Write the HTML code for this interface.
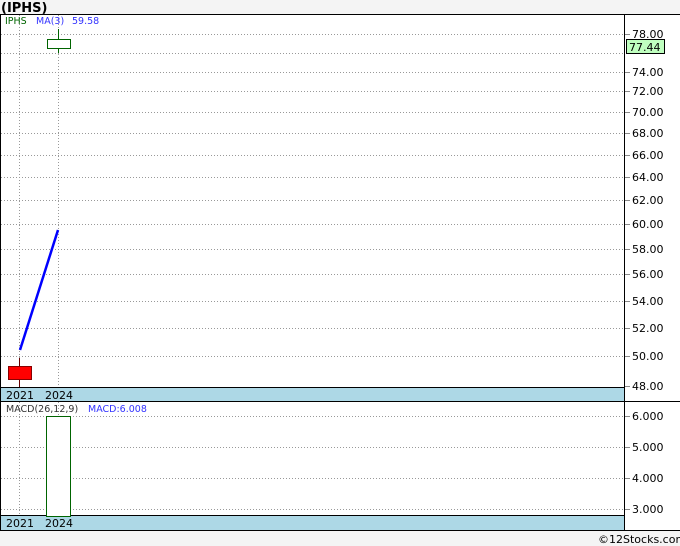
<!DOCTYPE html><html><head><style>body{margin:0;background:#f4f4f4}svg{display:block}text{font-family:"DejaVu Sans","Liberation Sans",sans-serif}</style></head><body>
<svg width="680" height="546" xmlns="http://www.w3.org/2000/svg">
<rect width="680" height="546" fill="#f4f4f4"/>
<text x="1" y="12" font-size="13" font-weight="bold" fill="#000">(IPHS)</text>
<rect x="0.5" y="14.5" width="680" height="516" fill="#fff" stroke="#000"/>
<g stroke="#999" stroke-dasharray="1,2" stroke-width="1">
<line x1="1" x2="624" y1="34.5" y2="34.5"/><line x1="1" x2="624" y1="53.5" y2="53.5"/><line x1="1" x2="624" y1="72.5" y2="72.5"/><line x1="1" x2="624" y1="91.5" y2="91.5"/><line x1="1" x2="624" y1="112.5" y2="112.5"/><line x1="1" x2="624" y1="133.5" y2="133.5"/><line x1="1" x2="624" y1="155.5" y2="155.5"/><line x1="1" x2="624" y1="177.5" y2="177.5"/><line x1="1" x2="624" y1="200.5" y2="200.5"/><line x1="1" x2="624" y1="224.5" y2="224.5"/><line x1="1" x2="624" y1="249.5" y2="249.5"/><line x1="1" x2="624" y1="274.5" y2="274.5"/><line x1="1" x2="624" y1="301.5" y2="301.5"/><line x1="1" x2="624" y1="328.5" y2="328.5"/><line x1="1" x2="624" y1="356.5" y2="356.5"/>
<line x1="1" x2="624" y1="416.5" y2="416.5"/><line x1="1" x2="624" y1="447.5" y2="447.5"/><line x1="1" x2="624" y1="478.5" y2="478.5"/><line x1="1" x2="624" y1="509.5" y2="509.5"/>
<line x1="19.5" x2="19.5" y1="15" y2="530"/><line x1="58.5" x2="58.5" y1="15" y2="530"/>
</g>
<g font-size="11" fill="#000">
<text x="632" y="38">78.00</text><text x="632" y="76">74.00</text><text x="632" y="95">72.00</text><text x="632" y="116">70.00</text><text x="632" y="137">68.00</text><text x="632" y="159">66.00</text><text x="632" y="181">64.00</text><text x="632" y="204">62.00</text><text x="632" y="228">60.00</text><text x="632" y="253">58.00</text><text x="632" y="278">56.00</text><text x="632" y="305">54.00</text><text x="632" y="332">52.00</text><text x="632" y="360">50.00</text><text x="632" y="390">48.00</text>
<text x="632" y="420">6.000</text><text x="632" y="451">5.000</text><text x="632" y="482">4.000</text><text x="632" y="513">3.000</text>
</g>
<g stroke="#888"><line x1="624" x2="630" y1="34.5" y2="34.5"/><line x1="624" x2="630" y1="72.5" y2="72.5"/><line x1="624" x2="630" y1="91.5" y2="91.5"/><line x1="624" x2="630" y1="112.5" y2="112.5"/><line x1="624" x2="630" y1="133.5" y2="133.5"/><line x1="624" x2="630" y1="155.5" y2="155.5"/><line x1="624" x2="630" y1="177.5" y2="177.5"/><line x1="624" x2="630" y1="200.5" y2="200.5"/><line x1="624" x2="630" y1="224.5" y2="224.5"/><line x1="624" x2="630" y1="249.5" y2="249.5"/><line x1="624" x2="630" y1="274.5" y2="274.5"/><line x1="624" x2="630" y1="301.5" y2="301.5"/><line x1="624" x2="630" y1="328.5" y2="328.5"/><line x1="624" x2="630" y1="356.5" y2="356.5"/><line x1="624" x2="630" y1="386.5" y2="386.5"/><line x1="624" x2="630" y1="416.5" y2="416.5"/><line x1="624" x2="630" y1="447.5" y2="447.5"/><line x1="624" x2="630" y1="478.5" y2="478.5"/><line x1="624" x2="630" y1="509.5" y2="509.5"/></g>
<rect x="626.5" y="39.5" width="38" height="14" fill="#bfffbf" stroke="#000"/>
<text x="629" y="51" font-size="11" fill="#000">77.44</text>
<rect x="1" y="387" width="623" height="14" fill="#add8e6"/>
<rect x="1" y="516" width="623" height="14" fill="#add8e6"/>
<line x1="0" x2="624" y1="387.5" y2="387.5" stroke="#000"/>
<line x1="0" x2="680" y1="401.5" y2="401.5" stroke="#000"/>
<line x1="0" x2="624" y1="515.5" y2="515.5" stroke="#000"/>
<line x1="624.5" x2="624.5" y1="14" y2="531" stroke="#000"/>
<g font-size="11" fill="#000"><text x="6" y="399">2021</text><text x="45" y="399">2024</text><text x="6" y="527">2021</text><text x="45" y="527">2024</text></g>
<text x="5" y="24" font-size="9.5" fill="#006400">IPHS</text>
<text x="36" y="24" font-size="9.5" fill="#3333ff">MA(3)</text>
<text x="72" y="24" font-size="9.5" fill="#3333ff">59.58</text>
<text x="6" y="412" font-size="9.5" fill="#333">MACD(26,12,9)</text>
<text x="88" y="412" font-size="9.5" fill="#3333ff">MACD:6.008</text>
<line x1="58.5" x2="58.5" y1="29" y2="53" stroke="#006400"/>
<rect x="47.5" y="39.5" width="23" height="9" fill="#fff" stroke="#006400"/>
<line x1="19.5" x2="19.5" y1="358" y2="387" stroke="#600"/>
<rect x="8.5" y="366.5" width="23" height="13" fill="#f00" stroke="#800"/>
<line x1="20" y1="350" x2="58" y2="230" stroke="#00f" stroke-width="2.5"/>
<rect x="46.5" y="416.5" width="24" height="100" fill="#fff" stroke="#006400"/>
<text x="598" y="543" font-size="11" fill="#000">©12Stocks.com</text>
</svg></body></html>
